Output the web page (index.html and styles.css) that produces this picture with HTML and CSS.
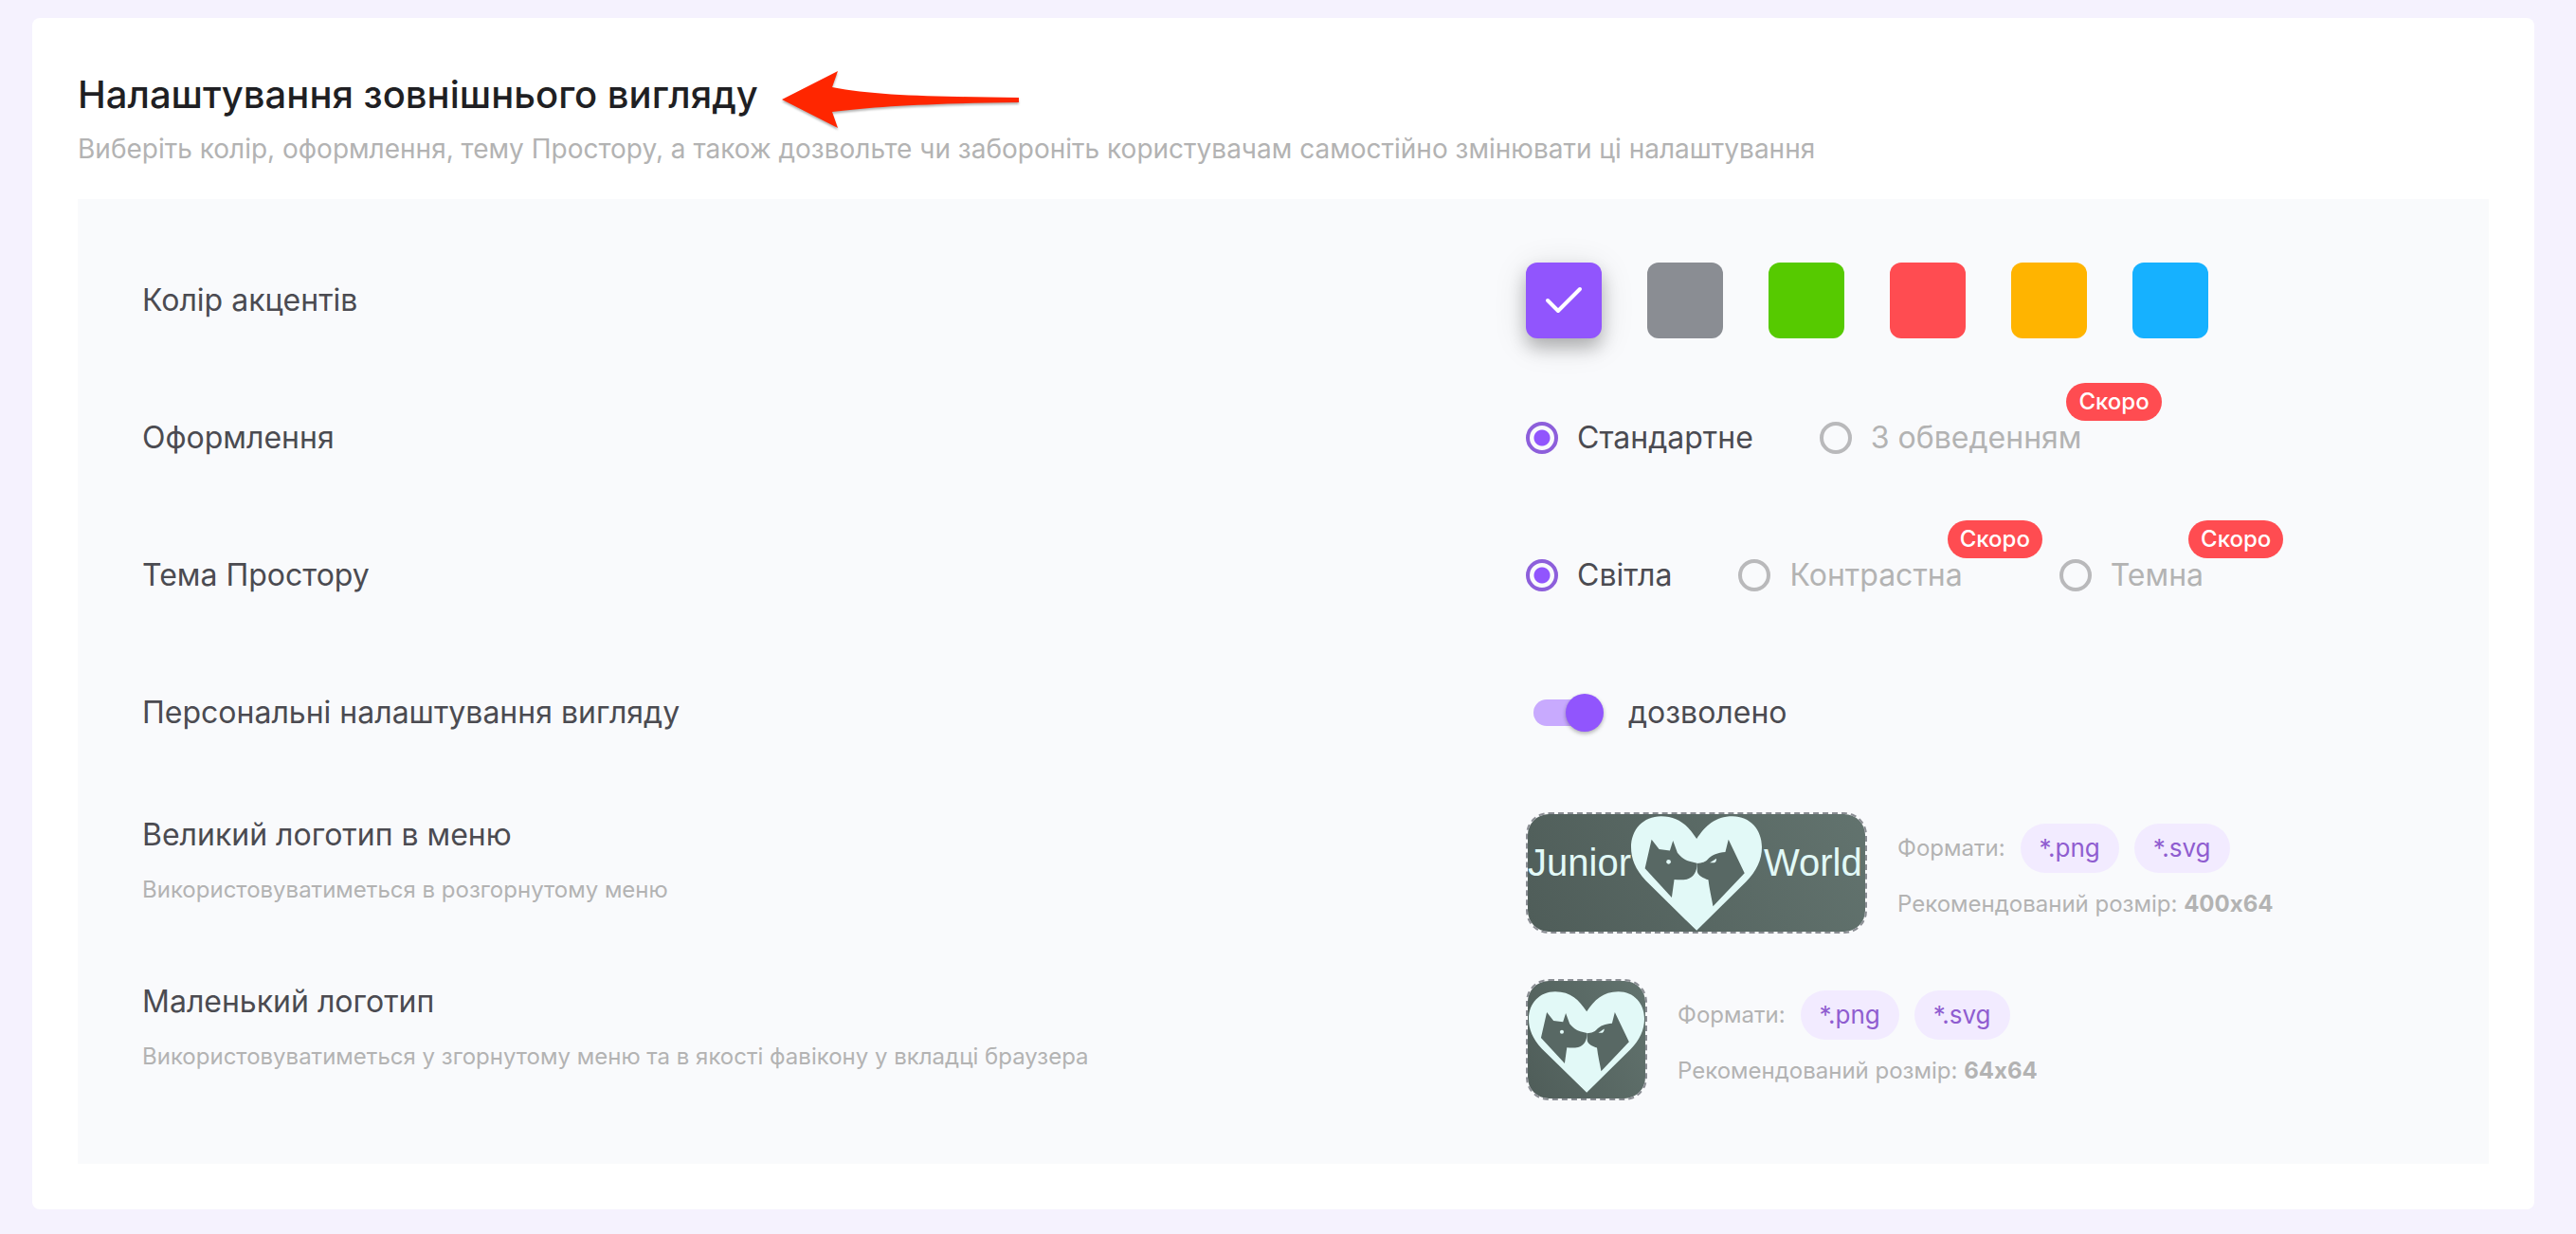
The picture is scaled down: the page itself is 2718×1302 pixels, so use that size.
FILE: index.html
```html
<!DOCTYPE html>
<html lang="uk">
<head>
  <meta charset="UTF-8">
  <meta name="viewport" content="width=device-width, initial-scale=1.0">
  <title>Налаштування зовнішнього вигляду</title>
  <link rel="stylesheet" href="styles.css">
</head>
<body>
  <svg class="sprite" aria-hidden="true">
    <symbol id="pets" viewBox="393 62 415 363">
      <path class="logo-light" d="M601 425 L440 267 C406 230 393 197 393 160 C393 104 432 62 488 62 C544 62 574 92 601 134 C628 92 660 62 715 62 C770 62 808 104 808 160 C808 200 791 236 758 270 Z"/>
      <path class="logo-dark" d="M458 136 L482 167 L516 171 L526 140 L540 178 C552 192 562 201 578 205 L602 211 C603 236 592 257 570 262 C556 265 543 264 530 263 L522 320 L437 228 Z"/>
      <path class="logo-dark" d="M702 136 L753 243 L653 348 C648 320 641 290 638 264 C622 258 607 252 603 238 L602 212 C620 210 629 207 636 199 C650 184 668 178 692 176 Z"/>
      <circle class="logo-light" cx="512" cy="207" r="7"/>
      <path class="logo-light" d="M643 210 L664 196 C664 203 662 208 657 210 Z"/>
    </symbol>
  </svg>

  <main class="card">
    <header class="card-header">
      <div class="title-row">
        <h1>Налаштування зовнішнього вигляду</h1>
        <svg class="arrow" viewBox="0 0 252 64" aria-hidden="true">
          <path d="M1 31 L60 1 L54 18 C100 27 160 28 251 29 L251 34 C160 35 100 38 54 44 L60 61 Z"/>
        </svg>
      </div>
      <p class="subtitle">Виберіть колір, оформлення, тему Простору, а також дозвольте чи забороніть користувачам самостійно змінювати ці налаштування</p>
    </header>

    <form class="panel">
      <div class="row">
        <div class="label">Колір акцентів</div>
        <div class="swatches">
          <button type="button" class="swatch violet selected" aria-label="Фіолетовий">
            <svg viewBox="0 0 40 30" aria-hidden="true"><path d="M3 15 L14 26 L37 3"/></svg>
          </button>
          <button type="button" class="swatch gray" aria-label="Сірий"></button>
          <button type="button" class="swatch green" aria-label="Зелений"></button>
          <button type="button" class="swatch red" aria-label="Червоний"></button>
          <button type="button" class="swatch yellow" aria-label="Жовтий"></button>
          <button type="button" class="swatch blue" aria-label="Блакитний"></button>
        </div>
      </div>

      <div class="row">
        <div class="label">Оформлення</div>
        <div class="options">
          <label class="option"><input type="radio" name="style" checked>Стандартне</label>
          <label class="option soon"><input type="radio" name="style" disabled>З обведенням<span class="badge">Скоро</span></label>
        </div>
      </div>

      <div class="row">
        <div class="label">Тема Простору</div>
        <div class="options">
          <label class="option"><input type="radio" name="theme" checked>Світла</label>
          <label class="option soon"><input type="radio" name="theme" disabled>Контрастна<span class="badge">Скоро</span></label>
          <label class="option soon"><input type="radio" name="theme" disabled>Темна<span class="badge">Скоро</span></label>
        </div>
      </div>

      <div class="row">
        <div class="label">Персональні налаштування вигляду</div>
        <label class="switch"><input type="checkbox" checked>дозволено</label>
      </div>

      <div class="logos">
        <div class="row logo-row">
          <div class="caption">
            <div class="label">Великий логотип в меню</div>
            <p class="hint">Використовуватиметься в розгорнутому меню</p>
          </div>
          <div class="upload">
            <button type="button" class="logo-box wide" aria-label="Великий логотип">
              <svg viewBox="0 0 356 124" aria-hidden="true">
                <text x="0" y="65">Junior</text>
                <use href="#pets" x="109" y="2" width="138" height="121"/>
                <text x="249" y="65">World</text>
              </svg>
            </button>
            <div class="details">
              <div class="formats">Формати: <span class="chip">*.png</span> <span class="chip">*.svg</span></div>
              <div class="size">Рекомендований розмір: <b>400x64</b></div>
            </div>
          </div>
        </div>

        <div class="row logo-row">
          <div class="caption">
            <div class="label">Маленький логотип</div>
            <p class="hint">Використовуватиметься у згорнутому меню та в якості фавікону у вкладці браузера</p>
          </div>
          <div class="upload">
            <button type="button" class="logo-box" aria-label="Маленький логотип">
              <svg viewBox="0 0 124 124" aria-hidden="true">
                <use href="#pets" x="1" y="11" width="122" height="107"/>
              </svg>
            </button>
            <div class="details">
              <div class="formats">Формати: <span class="chip">*.png</span> <span class="chip">*.svg</span></div>
              <div class="size">Рекомендований розмір: <b>64x64</b></div>
            </div>
          </div>
        </div>
      </div>
    </form>
  </main>
</body>
</html>
```

FILE: styles.css
```css
* {
  margin: 0;
  padding: 0;
  box-sizing: border-box;
}
body {
  background: #f5f2fe;
  font-family: Inter, 'Noto Sans', sans-serif;
  font-size: 32px;
  line-height: 44px;
  color: #4b4b51;
  padding: 19px 44px 25px 34px;
}
button, input {
  font: inherit;
  border: none;
}
.sprite {
  position: absolute;
  width: 0;
  height: 0;
}
.card {
  background: #fff;
  border-radius: 8px;
  padding: 48px;
}
.card-header {
  margin-bottom: 29px;
}
.title-row {
  display: flex;
  align-items: center;
  gap: 24px;
  height: 66px;
}
h1 {
  font-size: 40px;
  font-weight: 500;
  color: #1f1f23;
}
.arrow {
  width: 252px;
  height: 64px;
  fill: #ff2600;
  filter: drop-shadow(0 2px 1px rgba(0,0,0,0.3));
  overflow: visible;
  margin-top: 12px;
}
.subtitle {
  font-size: 28px;
  line-height: 48px;
  color: #b3b3b3;
}

/* Settings panel */
.panel {
  background: #f9fafc;
  padding: 67px 68px;
  display: flex;
  flex-direction: column;
  gap: 65px;
}
.row {
  display: grid;
  grid-template-columns: 3fr 2fr;
  gap: 38px;
  align-items: center;
  min-height: 80px;
}

/* Accent colors */
.swatches {
  display: flex;
  gap: 48px;
}
.swatch {
  width: 80px;
  height: 80px;
  border-radius: 12px;
  cursor: pointer;
  display: flex;
  justify-content: center;
  align-items: center;
}
.swatch svg {
  width: 40px;
  height: 30px;
  fill: none;
  stroke: #fff;
  stroke-width: 4;
  stroke-linecap: round;
  stroke-linejoin: round;
}
.selected {
  box-shadow: 0 10px 18px rgba(0,0,0,0.24), 0 6px 36px rgba(0,0,0,0.12);
}
.violet { background: #9155fd; }
.gray { background: #8a8d93; }
.green { background: #56ca00; }
.red { background: #ff4c51; }
.yellow { background: #ffb400; }
.blue { background: #16b1ff; }

/* Radio buttons */
.options {
  display: flex;
  gap: 70px;
}
.option {
  display: flex;
  align-items: center;
  position: relative;
}
.option input {
  appearance: none;
  width: 34px;
  height: 34px;
  border: 4px solid #b9b9bb;
  border-radius: 50%;
  margin-right: 20px;
}
.option input:checked {
  border-color: #8d5fdb;
  background: radial-gradient(circle, #9155fd 8px, transparent 9px);
}
.soon {
  color: #b3b3b3;
  margin-right: 32px;
}
.badge {
  position: absolute;
  left: calc(100% - 16px);
  top: -36px;
  height: 40px;
  padding: 0 13px;
  border-radius: 20px;
  background: #ff4c51;
  color: #fff;
  font-size: 24px;
  font-weight: 500;
  line-height: 40px;
}

/* Switch */
.switch {
  display: flex;
  align-items: center;
  gap: 26px;
  padding-left: 8px;
}
.switch input {
  appearance: none;
  width: 74px;
  height: 28px;
  border-radius: 14px;
  background: linear-gradient(#c8aafe, #c8aafe) left / 60px 28px no-repeat;
  position: relative;
}
.switch input::before {
  content: '';
  position: absolute;
  right: 0;
  top: -6px;
  width: 40px;
  height: 40px;
  border-radius: 50%;
  background: #9155fd;
  box-shadow: 0 2px 4px rgba(0,0,0,0.3);
}

/* Logos */
.logos {
  display: flex;
  flex-direction: column;
  gap: 48px;
}
.logo-row {
  align-items: start;
}
.caption {
  padding-top: 2px;
}
.hint {
  font-size: 24px;
  line-height: 36px;
  color: #b3b3b3;
  margin-top: 18px;
}
.upload {
  display: flex;
  align-items: center;
  gap: 32px;
}
.logo-box {
  width: 128px;
  height: 128px;
  border: 2px dashed #8a8d93;
  border-radius: 24px;
  background: linear-gradient(65deg, #4f5d59, #62736e) padding-box;
  overflow: hidden;
  cursor: pointer;
}
.logo-box svg {
  display: block;
  width: 100%;
  height: 100%;
}
.logo-box text {
  font-family: 'Liberation Sans', Arial, sans-serif;
  font-size: 40px;
  fill: #e2f9f7;
}
.wide {
  width: 360px;
}
.logo-light { fill: #e2f9f7; }
.logo-dark { fill: #586864; }
.details {
  display: flex;
  flex-direction: column;
  gap: 14px;
  font-size: 24px;
  line-height: 38px;
  color: #b3b3b3;
}
.formats {
  display: flex;
  align-items: center;
  gap: 16px;
}
.chip {
  padding: 0 20px;
  border-radius: 26px;
  background: #f2ebff;
  color: #8f5dd0;
  font-size: 26px;
  line-height: 52px;
}
```
